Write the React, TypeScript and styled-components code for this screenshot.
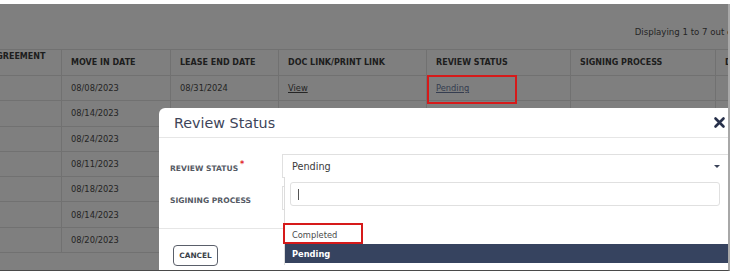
import * as React from 'react';
import styled, { createGlobalStyle } from 'styled-components';

const GlobalStyle = createGlobalStyle`
  html, body { margin: 0; padding: 0; background: #fff; }
  body { font-family: "DejaVu Sans", "Liberation Sans", sans-serif; }
`;

const Page = styled.div`
  width: 733px;
  height: 275px;
  padding-top: 4px;
  box-sizing: border-box;
`;

const Screen = styled.div`
  position: relative;
  width: 730px;
  height: 267px;
  overflow: hidden;
  background: #fff;
  border-right: 2px solid #a8a8a8;
  border-bottom: 1px solid #4a4a4a;
  box-sizing: border-box;
`;

const Content = styled.div`
  width: 858px;
  margin-left: -20px;
`;

const InfoBar = styled.div`
  height: 45px;
  box-sizing: border-box;
  display: flex;
  justify-content: flex-end;
  padding: 22px 62px 0 0;
  font-size: 8.6px;
  line-height: 12px;
  color: #4a4a4a;
  white-space: nowrap;
`;

const Table = styled.table`
  border-collapse: collapse;
  table-layout: fixed;
  width: 858px;
`;

const HeadCell = styled.th<{ $top?: boolean }>`
  height: 26px;
  box-sizing: border-box;
  padding: ${(p) => (p.$top ? '2px 9px 0' : '0 9px')};
  vertical-align: ${(p) => (p.$top ? 'top' : 'middle')};
  text-align: left;
  font-size: 8px;
  font-weight: bold;
  color: #3c3c3c;
  white-space: nowrap;
  overflow: hidden;
  border: 1px solid #e2e2e2;
`;

const Row = styled.tr`
  height: 25.3px;
`;

const Cell = styled.td`
  position: relative;
  padding: 0 9px;
  font-size: 8.3px;
  color: #4a4a4a;
  white-space: nowrap;
  border: 1px solid #e2e2e2;
`;

const Link = styled.span<{ $tone?: string }>`
  text-decoration: underline;
  color: ${(p) => p.$tone || '#4a4a4a'};
`;

const Mark = styled.div<{ $w: number; $h: number; $x: number; $y: number }>`
  position: absolute;
  left: ${(p) => p.$x}px;
  top: ${(p) => p.$y}px;
  width: ${(p) => p.$w}px;
  height: ${(p) => p.$h}px;
  border: 2px solid #d61a1a;
  box-sizing: border-box;
  z-index: 4;
  pointer-events: none;
`;

const Overlay = styled.div`
  position: absolute;
  inset: 0;
  background: rgba(0, 0, 0, 0.5);
  z-index: 1;
`;

const Modal = styled.div`
  position: absolute;
  left: 159px;
  top: 104px;
  width: 580px;
  height: 220px;
  background: #fff;
  border-radius: 6px 6px 0 0;
  z-index: 2;
`;

const ModalHeader = styled.div`
  height: 29px;
  display: flex;
  align-items: center;
  justify-content: space-between;
  padding: 0 13px 0 15px;
  border-bottom: 1px solid #e6e6e6;
`;

const Title = styled.h3`
  margin: 0;
  font-size: 14.3px;
  font-weight: normal;
  color: #3d4459;
`;

const ModalBody = styled.div`
  display: grid;
  grid-template-columns: 112px 1fr;
  row-gap: 8px;
  align-items: center;
  padding: 16px 8px 18px 11px;
  border-bottom: 1px solid #e6e6e6;
`;

const Label = styled.div<{ $required?: boolean }>`
  font-size: 7.6px;
  font-weight: bold;
  color: #555a64;
  white-space: nowrap;
  &::after {
    content: ${(p) => (p.$required ? "'*'" : "''")};
    color: #e0262b;
    font-size: 8px;
    vertical-align: 4px;
    margin-left: 2px;
  }
`;

const Field = styled.div`
  position: relative;
  height: 24px;
  box-sizing: border-box;
  border: 1px solid #e0e0e0;
  display: flex;
  align-items: center;
  justify-content: space-between;
  padding: 0 10px 0 9px;
  font-size: 9.7px;
  color: #3a3a3a;
`;

const Caret = styled.span`
  width: 0;
  height: 0;
  border-left: 3px solid transparent;
  border-right: 3px solid transparent;
  border-top: 3px solid #3a4358;
`;

const Dropdown = styled.div`
  position: absolute;
  top: 100%;
  left: 1px;
  right: 0;
  height: 88px;
  background: #fff;
  border-left: 1px solid #dcdcdc;
  border-right: 1px solid #dcdcdc;
  z-index: 3;
`;

const SearchWrap = styled.div`
  padding: 5px 9px 0 5px;
`;

const Search = styled.div`
  height: 24px;
  box-sizing: border-box;
  border: 1px solid #e0e0e0;
  border-radius: 3px;
  display: flex;
  align-items: center;
  padding-left: 7px;
`;

const TextCursor = styled.span`
  width: 1px;
  height: 11px;
  background: #555;
`;

const Option = styled.div<{ $active?: boolean }>`
  position: relative;
  height: 19px;
  display: flex;
  align-items: center;
  padding-left: 7px;
  font-size: 8.3px;
  font-weight: ${(p) => (p.$active ? 'bold' : 'normal')};
  color: ${(p) => (p.$active ? '#fff' : '#4a4a4a')};
  background: ${(p) => (p.$active ? '#36435f' : 'transparent')};
`;

const Footer = styled.div`
  padding: 14px 14px;
`;

const CancelButton = styled.button`
  width: 45px;
  height: 21px;
  padding: 0;
  background: #fff;
  border: 1px solid #5a5f6a;
  border-radius: 4px;
  font-family: inherit;
  font-size: 7.4px;
  font-weight: bold;
  color: #3a3f4a;
`;

const CloseIcon = () => (
  <svg width="13" height="13" viewBox="0 0 13 13">
    <path d="M2.5 2.5 L10.5 10.5 M10.5 2.5 L2.5 10.5" stroke="#27304a" strokeWidth="2.6" strokeLinecap="round" />
  </svg>
);

const rows = [
  ['08/08/2023', '08/31/2024'],
  ['08/14/2023', '08/31/2024'],
  ['08/24/2023', '08/31/2024'],
  ['08/11/2023', '07/31/2024'],
  ['08/18/2023', '08/31/2024'],
  ['08/14/2023', '08/31/2024'],
  ['08/20/2023', '08/31/2024'],
];

const widths = [81, 109, 108, 148, 144, 145, 123];

export default function App() {
  return (
    <Page>
      <GlobalStyle />
      <Screen>
        <Content>
          <InfoBar>Displaying 1 to 7 out of 7 entries</InfoBar>
          <Table>
            <colgroup>
              {widths.map((w, i) => (
                <col key={i} style={{ width: w }} />
              ))}
            </colgroup>
            <thead>
              <tr>
                <HeadCell $top>AGREEMENT</HeadCell>
                <HeadCell>MOVE IN DATE</HeadCell>
                <HeadCell>LEASE END DATE</HeadCell>
                <HeadCell>DOC LINK/PRINT LINK</HeadCell>
                <HeadCell>REVIEW STATUS</HeadCell>
                <HeadCell>SIGNING PROCESS</HeadCell>
                <HeadCell>DATE SIGNED</HeadCell>
              </tr>
            </thead>
            <tbody>
              {rows.map((r, i) => (
                <Row key={i}>
                  <Cell />
                  <Cell>{r[0]}</Cell>
                  <Cell>{r[1]}</Cell>
                  <Cell>
                    <Link>View</Link>
                  </Cell>
                  <Cell>
                    <Link $tone="#6a7ba0">Pending</Link>
                    {i === 0 && <Mark $x={0} $y={-1} $w={90} $h={29} />}
                  </Cell>
                  <Cell />
                  <Cell />
                </Row>
              ))}
            </tbody>
          </Table>
        </Content>
        <Overlay />
        <Modal>
          <ModalHeader>
            <Title>Review Status</Title>
            <CloseIcon />
          </ModalHeader>
          <ModalBody>
            <Label $required>REVIEW STATUS</Label>
            <Field>
              Pending
              <Caret />
              <Dropdown>
                <SearchWrap>
                  <Search>
                    <TextCursor />
                  </Search>
                </SearchWrap>
                <Option />
                <Option>
                  Completed
                  <Mark $x={-2} $y={-2} $w={80} $h={21} />
                </Option>
                <Option $active>Pending</Option>
              </Dropdown>
            </Field>
            <Label>SIGINING PROCESS</Label>
            <Field />
          </ModalBody>
          <Footer>
            <CancelButton>CANCEL</CancelButton>
          </Footer>
        </Modal>
      </Screen>
    </Page>
  );
}
